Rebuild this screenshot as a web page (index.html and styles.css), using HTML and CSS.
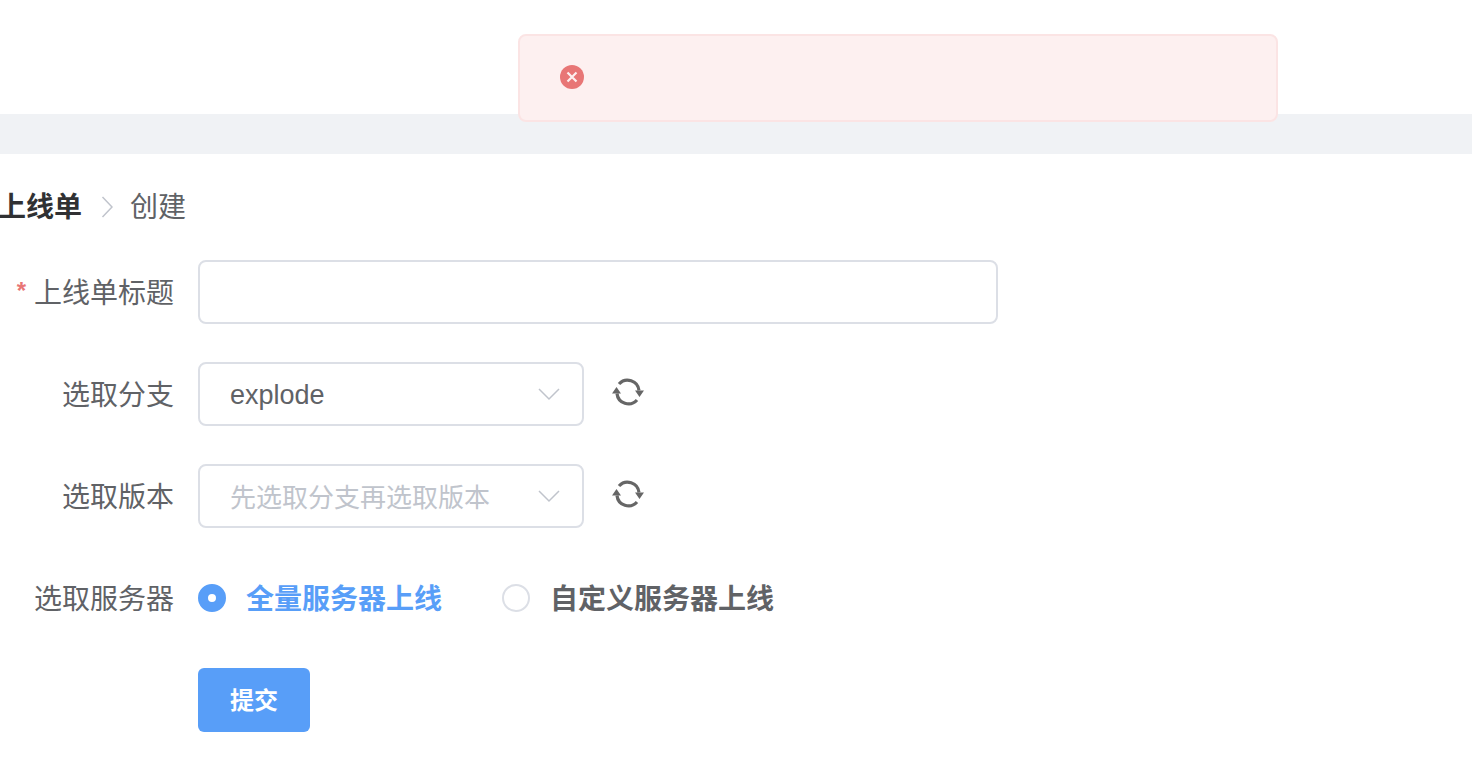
FILE: index.html
```html
<!DOCTYPE html>
<html lang="zh-CN">
<head>
  <meta charset="UTF-8" />
  <title>创建上线单</title>
  <link rel="stylesheet" href="styles.css">
</head>
<body>
  <div class="alert">
    <span class="alert-icon">
      <svg viewBox="0 0 24 24" width="24" height="24">
        <circle cx="12" cy="12" r="12" fill="#e87676"/>
        <path d="M7.500 7.500l9 9M16.500 7.500l-9 9" stroke="#fdf0f0" stroke-width="2.200" fill="none"/>
      </svg>
    </span>
  </div>

  <div class="header"></div>
  <div class="band"></div>

  <div class="main">
    <div class="crumb">
      <span class="crumb-first">上线单</span>
      <svg class="crumb-sep" viewBox="0 0 12 24" width="12" height="24">
        <path d="M1.500 2L11 12l-9.500 10" stroke="#c0c4cc" stroke-width="1.500" fill="none"/>
      </svg>
      <span class="crumb-last">创建</span>
    </div>

    <div class="form">
      <div class="row">
        <label class="row-label"><span class="star">*</span>上线单标题</label>
        <input class="text-input" type="text" />
      </div>

      <div class="row">
        <label class="row-label">选取分支</label>
        <div class="select">
          <span class="select-value">explode</span>
          <svg class="arrow" viewBox="0 0 22 14" width="22" height="14"><path d="M1 2l10 10L21 2" stroke="#c0c4cc" stroke-width="1.500" fill="none"/></svg>
        </div>
        <svg class="refresh" viewBox="0 0 32 28" width="32" height="28">
          <path d="M7 6A11.500 11.500 0 0 1 27 12.500M25 22A11.500 11.500 0 0 1 5 15.500" stroke="#666" stroke-width="3.200" fill="none"/>
          <path d="M23 12.500h9l-4.500 6.500zM0 15.500h9L4.500 9z" fill="#666"/>
        </svg>
      </div>

      <div class="row">
        <label class="row-label">选取版本</label>
        <div class="select">
          <span class="select-placeholder">先选取分支再选取版本</span>
          <svg class="arrow" viewBox="0 0 22 14" width="22" height="14"><path d="M1 2l10 10L21 2" stroke="#c0c4cc" stroke-width="1.500" fill="none"/></svg>
        </div>
        <svg class="refresh" viewBox="0 0 32 28" width="32" height="28">
          <path d="M7 6A11.500 11.500 0 0 1 27 12.500M25 22A11.500 11.500 0 0 1 5 15.500" stroke="#666" stroke-width="3.200" fill="none"/>
          <path d="M23 12.500h9l-4.500 6.500zM0 15.500h9L4.500 9z" fill="#666"/>
        </svg>
      </div>

      <div class="row">
        <label class="row-label">选取服务器</label>
        <div class="radio radio-on">
          <span class="radio-dot"></span>
          <span class="radio-text">全量服务器上线</span>
        </div>
        <div class="radio">
          <span class="radio-dot"></span>
          <span class="radio-text">自定义服务器上线</span>
        </div>
      </div>

      <div class="row">
        <span class="row-label"></span>
        <button class="submit">提交</button>
      </div>
    </div>
  </div>
</body>
</html>
```

FILE: styles.css
```css
:root {
  --primary: #589ef8;
  --border: #dcdfe6;
  --text: #606266;
  --danger: #e87676;
}

body {
  margin: 0;
  font-family: "Liberation Sans", "Noto Sans CJK SC", sans-serif;
  background: white;
  color: var(--text);
  overflow: hidden;
}

.alert {
  position: absolute;
  top: 34px;
  left: 518px;
  width: 760px;
  height: 88px;
  box-sizing: border-box;
  padding: 0 40px 2px;
  display: flex;
  align-items: center;
  background: #fdf0f0;
  border: 2px solid #fbe4e4;
  border-radius: 8px;
}

.alert-icon {
  display: flex;
}

.header {
  height: 114px;
}

.band {
  height: 40px;
  background: #f0f2f5;
}

.crumb {
  display: flex;
  align-items: center;
  height: 40px;
  margin: 32px 0 0 -2px;
  padding-bottom: 2px;
  font-size: 28px;
}

.crumb-first {
  font-weight: 700;
  color: #303133;
  padding-bottom: 2px;
}

.crumb-last {
  padding-bottom: 2px;
}

.crumb-sep {
  margin: 2px 17px 0 19px;
}

.form {
  margin-top: 32px;
}

.row {
  display: flex;
  align-items: center;
  height: 64px;
  margin-bottom: 38px;
}

.row-label {
  width: 174px;
  margin-right: 24px;
  padding-bottom: 2px;
  text-align: right;
  font-size: 28px;
  flex-shrink: 0;
}

.star {
  color: var(--danger);
  font-weight: 700;
  font-size: 24px;
  vertical-align: 4px;
  margin-right: 8px;
}

.text-input {
  width: 800px;
  height: 64px;
  box-sizing: border-box;
  border: 2px solid var(--border);
  border-radius: 8px;
  outline: none;
}

.select {
  width: 386px;
  height: 64px;
  box-sizing: border-box;
  padding: 0 22px 0 30px;
  display: flex;
  align-items: center;
  justify-content: space-between;
  border: 2px solid var(--border);
  border-radius: 8px;
  font-size: 27px;
}

.select-value {
  padding-top: 2px;
}

.select-placeholder {
  padding-bottom: 2px;
  font-size: 26px;
  color: #c0c4cc;
}

.refresh {
  margin: -4px 0 0 28px;
}

.radio {
  display: flex;
  align-items: center;
  gap: 20px;
  margin-right: 60px;
  font-size: 28px;
  font-weight: 700;
}

.radio-text {
  padding-bottom: 2px;
}

.radio-dot {
  width: 28px;
  height: 28px;
  box-sizing: border-box;
  border: 2px solid var(--border);
  border-radius: 50%;
}

.radio-on {
  color: var(--primary);
}

.radio-on .radio-dot {
  border: 10px solid var(--primary);
  background: white;
}

.submit {
  width: 112px;
  height: 64px;
  padding: 0 0 4px;
  background: var(--primary);
  color: white;
  border: none;
  border-radius: 6px;
  font-family: inherit;
  font-size: 24px;
  font-weight: 700;
}
```
